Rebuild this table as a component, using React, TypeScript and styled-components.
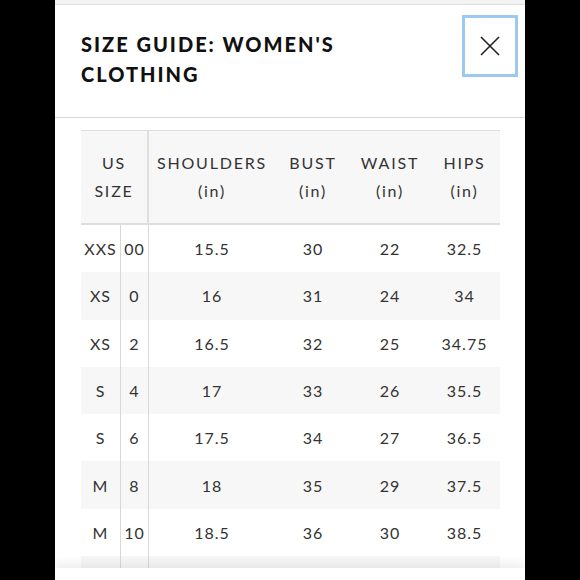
import styled, { createGlobalStyle } from 'styled-components';

const GlobalStyle = createGlobalStyle`
  html, body {
    margin: 0;
    padding: 0;
    background: #000;
  }
  body {
    font-family: Lato, "Noto Sans", "Liberation Sans", sans-serif;
  }
`;

const Page = styled.div`
  width: 580px;
  height: 580px;
  overflow: hidden;
  background: #000;
`;

const Panel = styled.div`
  margin-left: 55px;
  width: 470px;
  height: 580px;
  background: #fff;
  display: flex;
  flex-direction: column;
  overflow: hidden;
`;

const TopStrip = styled.div`
  height: 4px;
  flex: none;
  background: #f3f3f3;
  border-bottom: 1px solid #dcdcdc;
`;

const Header = styled.div`
  height: 112px;
  flex: none;
  display: flex;
  justify-content: space-between;
  align-items: flex-start;
  padding-left: 26px;
  padding-right: 7px;
  border-bottom: 1px solid #d8d8d8;
`;

const Title = styled.h1`
  margin: 24px 0 0;
  font-size: 20px;
  font-weight: 900;
  line-height: 30px;
  letter-spacing: 2px;
  color: #111;
`;

const CloseButton = styled.button`
  margin-top: 10px;
  width: 56px;
  height: 62px;
  padding: 0;
  background: #fff;
  border: 3px solid #9dc8ef;
  display: flex;
  align-items: center;
  justify-content: center;
  cursor: pointer;
`;

const Body = styled.div`
  flex: 1;
  overflow: hidden;
  padding: 12px 25px 0 26px;
`;

const Table = styled.div`
  display: grid;
  grid-template-columns: 40px 28px 126px 76px 78px 71px;
  border-top: 1px solid #dedede;
  color: #333;
  font-size: 16px;
  letter-spacing: 1px;
`;

const HeadCell = styled.div<{ $span?: number; $divider?: boolean }>`
  grid-column: span ${({ $span }) => $span ?? 1};
  height: 94px;
  background: #f7f7f7;
  border-bottom: 2px solid #dedede;
  border-right: ${({ $divider }) => ($divider ? '2px solid #dedede' : 'none')};
  display: flex;
  flex-direction: column;
  align-items: center;
  justify-content: center;
  line-height: 28px;
  letter-spacing: 1.8px;
  text-align: center;
  box-sizing: border-box;
`;

const Cell = styled.div<{ $shade: boolean; $divider?: boolean }>`
  height: 47.3px;
  background: ${({ $shade }) => ($shade ? '#f7f7f7' : '#fff')};
  border-right: ${({ $divider }) => ($divider ? '1px solid #d8d8d8' : 'none')};
  display: flex;
  align-items: center;
  justify-content: center;
  box-sizing: border-box;
  white-space: nowrap;
`;

const Footer = styled.div`
  height: 12px;
  flex: none;
  background: #fff;
  position: relative;
  z-index: 1;
  box-shadow: 0 -5px 10px rgba(0, 0, 0, 0.07);
`;

const rows: string[][] = [
  ['XXS', '00', '15.5', '30', '22', '32.5'],
  ['XS', '0', '16', '31', '24', '34'],
  ['XS', '2', '16.5', '32', '25', '34.75'],
  ['S', '4', '17', '33', '26', '35.5'],
  ['S', '6', '17.5', '34', '27', '36.5'],
  ['M', '8', '18', '35', '29', '37.5'],
  ['M', '10', '18.5', '36', '30', '38.5'],
  ['', '', '', '', '', ''],
];

function CloseIcon() {
  return (
    <svg width="22" height="22" viewBox="0 0 22 22" fill="none">
      <path d="M2 2L20 20M20 2L2 20" stroke="#222" strokeWidth="1.6" />
    </svg>
  );
}

export default function App() {
  return (
    <Page>
      <GlobalStyle />
      <Panel>
        <TopStrip />
        <Header>
          <Title>
            SIZE GUIDE: WOMEN'S
            <br />
            CLOTHING
          </Title>
          <CloseButton aria-label="Close">
            <CloseIcon />
          </CloseButton>
        </Header>
        <Body>
          <Table>
            <HeadCell $span={2} $divider>
              <span>US</span>
              <span>SIZE</span>
            </HeadCell>
            <HeadCell>
              <span>SHOULDERS</span>
              <span>(in)</span>
            </HeadCell>
            <HeadCell>
              <span>BUST</span>
              <span>(in)</span>
            </HeadCell>
            <HeadCell>
              <span>WAIST</span>
              <span>(in)</span>
            </HeadCell>
            <HeadCell>
              <span>HIPS</span>
              <span>(in)</span>
            </HeadCell>
            {rows.map((row, i) => {
              const shade = i % 2 === 1;
              return row.map((value, j) => (
                <Cell key={`${i}-${j}`} $shade={shade} $divider={j === 0 || j === 1}>
                  {value}
                </Cell>
              ));
            })}
          </Table>
        </Body>
        <Footer />
      </Panel>
    </Page>
  );
}
